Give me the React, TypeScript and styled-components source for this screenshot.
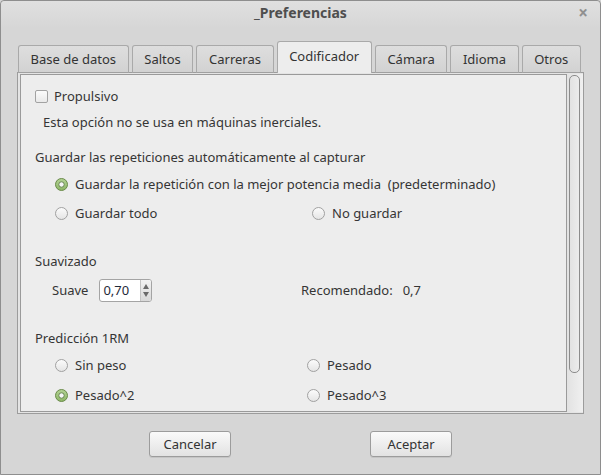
import React from "react";
import styled, { createGlobalStyle } from "styled-components";

const Global = createGlobalStyle`
  html, body { margin: 0; padding: 0; background: #d6d6d6; }
  body {
    font-family: "Noto Sans", "DejaVu Sans", sans-serif;
    font-size: 13px;
    color: #353535;
  }
  * { box-sizing: border-box; }
`;

const Window = styled.div`
  width: 601px;
  height: 475px;
  border: 1px solid #8e8e8e;
  border-radius: 4px 4px 0 0;
  background: #d6d6d6;
  display: flex;
  flex-direction: column;
`;

const TitleBar = styled.div`
  height: 27px;
  padding-bottom: 4px;
  display: grid;
  grid-template-columns: 1fr auto 1fr;
  align-items: center;
  background: linear-gradient(#e0e0e0, #d6d6d6);
  border-radius: 4px 4px 0 0;
`;

const Title = styled.div`
  grid-column: 2;
  font-weight: bold;
  font-size: 14px;
  color: #4e4e4e;
`;

const Close = styled.div`
  justify-self: end;
  margin-right: 12px;
  font-size: 17px;
  color: #909090;
  font-weight: bold;
`;

const Body = styled.div`
  flex: 1;
  display: flex;
  flex-direction: column;
  padding: 13px 16px 0 16px;
`;

const TabRow = styled.div`
  display: flex;
  align-items: flex-end;
  gap: 3px;
  margin-left: 1px;
  margin-bottom: -1px;
  position: relative;
  z-index: 1;
`;

const Tab = styled.div<{ $active?: boolean }>`
  flex-shrink: 0;
  white-space: nowrap;
  height: ${(p) => (p.$active ? 32 : 28)}px;
  padding: 0 11.6px;
  display: flex;
  align-items: center;
  justify-content: center;
  border: 1px solid #a9a9a9;
  border-bottom: ${(p) => (p.$active ? "none" : "1px solid #a0a0a0")};
  border-radius: 3px 3px 0 0;
  color: #333;
  background: ${(p) =>
    p.$active ? "#ededed" : "linear-gradient(#dedede, #d2d2d2)"};
  padding-bottom: ${(p) => (p.$active ? 3 : 0)}px;
`;

const Panel = styled.div`
  height: 342px;
  border: 1px solid #9c9c9c;
  background: #e4e4e4;
  padding: 1px 0 1px 2px;
  display: flex;
`;

const Content = styled.div`
  flex: 1;
  border: 1px solid #9a9a9a;
  background: #ededed;
  display: flex;
  flex-direction: column;
  padding: 8px 0 0 14px;
  overflow: hidden;
`;

const ScrollTrack = styled.div`
  width: 16px;
  padding: 1px 3px 0 2px;
  background: linear-gradient(90deg, #e2e2e2, #f0f0f0);
`;

const ScrollThumb = styled.div`
  height: 298px;
  border: 1px solid #8c8c8c;
  border-radius: 5px;
  background: linear-gradient(90deg, #e2e2e2, #ececec);
`;

const Row = styled.div<{ $mt?: number; $indent?: number }>`
  height: 26px;
  display: flex;
  align-items: center;
  margin-top: ${(p) => p.$mt ?? 0}px;
  padding-left: ${(p) => p.$indent ?? 0}px;
`;

const Check = styled.span`
  width: 13px;
  height: 13px;
  border: 1px solid #a2a2a2;
  border-radius: 2px;
  background: linear-gradient(#fbfbfb, #e9e9e9);
  margin-right: 6px;
`;

const Section = styled.div<{ $mt: number }>`
  margin-top: ${(p) => p.$mt}px;
  display: flex;
  flex-direction: column;
`;

const OptionGrid = styled.div<{ $col: number; $gap: number }>`
  display: grid;
  grid-template-columns: ${(p) => p.$col}px auto;
  grid-auto-rows: 26px;
  row-gap: ${(p) => p.$gap}px;
  margin-top: 1px;
  padding-left: 20px;
`;

const Option = styled.label<{ $wide?: boolean }>`
  display: flex;
  align-items: center;
  gap: 7px;
  grid-column: ${(p) => (p.$wide ? "1 / -1" : "auto")};
  white-space: pre;
`;

const SpinRow = styled.div`
  height: 26px;
  margin-top: 3px;
  display: grid;
  grid-template-columns: 249px auto;
  align-items: center;
  padding-left: 17px;
`;

const SpinGroup = styled.div`
  display: flex;
  align-items: center;
  gap: 11px;
`;

const Spin = styled.div`
  width: 53px;
  height: 23px;
  border: 1px solid #a4a4a4;
  border-radius: 3px;
  background: #fff;
  display: flex;
  overflow: hidden;
`;

const SpinValue = styled.div`
  flex: 1;
  display: flex;
  align-items: center;
  padding-left: 3px;
  color: #1f2a3a;
`;

const SpinArrows = styled.div`
  width: 11px;
  border-left: 1px solid #c4c4c4;
  background: linear-gradient(#f2f2f2, #d9d9d9);
  display: flex;
  flex-direction: column;
  align-items: center;
  justify-content: center;
  gap: 3px;
`;

const Value = styled.span`
  margin-left: 10px;
`;

const Footer = styled.div`
  display: flex;
  justify-content: center;
  gap: 139px;
  padding-top: 17px;
`;

const Button = styled.div`
  width: 82px;
  height: 26px;
  border: 1px solid #9c9c9c;
  border-radius: 3px;
  background: linear-gradient(#fafafa, #e2e2e2);
  box-shadow: 0 1px 0 rgba(0, 0, 0, 0.08);
  display: flex;
  align-items: center;
  justify-content: center;
  color: #333;
`;

const Radio: React.FC<{ on?: boolean }> = ({ on }) => (
  <svg width="13" height="13" viewBox="0 0 13 13">
    <defs>
      <linearGradient id="ru" x1="0" y1="0" x2="0" y2="1">
        <stop offset="0" stopColor="#fcfcfc" />
        <stop offset="1" stopColor="#e4e4e4" />
      </linearGradient>
      <linearGradient id="rc" x1="0" y1="0" x2="0" y2="1">
        <stop offset="0" stopColor="#b3d394" />
        <stop offset="1" stopColor="#8db566" />
      </linearGradient>
    </defs>
    {on ? (
      <>
        <circle cx="6.5" cy="6.5" r="6" fill="url(#rc)" stroke="#6a8a4a" />
        <circle cx="6.5" cy="6.5" r="2.7" fill="#f6f6f6" stroke="#5f7d47" strokeWidth="0.9" />
      </>
    ) : (
      <circle cx="6.5" cy="6.5" r="6" fill="url(#ru)" stroke="#a0a0a0" />
    )}
  </svg>
);

const Arrow: React.FC<{ up?: boolean }> = ({ up }) => (
  <svg width="6" height="5" viewBox="0 0 6 5">
    <path d={up ? "M3 0 L6 5 L0 5 Z" : "M0 0 L6 0 L3 5 Z"} fill="#6a6a6a" />
  </svg>
);

const tabs = ["Base de datos", "Saltos", "Carreras", "Codificador", "Cámara", "Idioma", "Otros"];

export default function App() {
  return (
    <>
      <Global />
      <Window>
        <TitleBar>
          <Title>_Preferencias</Title>
          <Close>×</Close>
        </TitleBar>
        <Body>
          <TabRow>
            {tabs.map((t) => (
              <Tab key={t} $active={t === "Codificador"}>
                {t}
              </Tab>
            ))}
          </TabRow>
          <Panel>
            <Content>
              <Row>
                <Check />
                Propulsivo
              </Row>
              <Row $indent={8}>Esta opción no se usa en máquinas inerciales.</Row>

              <Section $mt={9}>
                <Row>Guardar las repeticiones automáticamente al capturar</Row>
                <OptionGrid $col={257} $gap={3}>
                  <Option $wide>
                    <Radio on />
                    {"Guardar la repetición con la mejor potencia media  (predeterminado)"}
                  </Option>
                  <Option>
                    <Radio />
                    Guardar todo
                  </Option>
                  <Option>
                    <Radio />
                    No guardar
                  </Option>
                </OptionGrid>
              </Section>

              <Section $mt={22}>
                <Row>Suavizado</Row>
                <SpinRow>
                  <SpinGroup>
                    Suave
                    <Spin>
                      <SpinValue>0,70</SpinValue>
                      <SpinArrows>
                        <Arrow up />
                        <Arrow />
                      </SpinArrows>
                    </Spin>
                  </SpinGroup>
                  <div>
                    Recomendado:<Value>0,7</Value>
                  </div>
                </SpinRow>
              </Section>

              <Section $mt={22}>
                <Row>Predicción 1RM</Row>
                <OptionGrid $col={252} $gap={4}>
                  <Option>
                    <Radio />
                    Sin peso
                  </Option>
                  <Option>
                    <Radio />
                    Pesado
                  </Option>
                  <Option>
                    <Radio on />
                    Pesado^2
                  </Option>
                  <Option>
                    <Radio />
                    Pesado^3
                  </Option>
                </OptionGrid>
              </Section>
            </Content>
            <ScrollTrack>
              <ScrollThumb />
            </ScrollTrack>
          </Panel>
          <Footer>
            <Button>Cancelar</Button>
            <Button>Aceptar</Button>
          </Footer>
        </Body>
      </Window>
    </>
  );
}
